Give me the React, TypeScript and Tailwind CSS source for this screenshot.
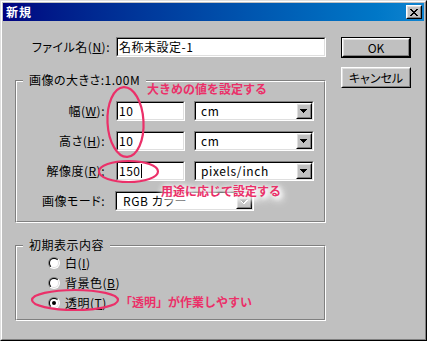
import React from "react";

const FONT = "font-['Noto_Sans_CJK_JP',sans-serif]";
const PINK = "#eb3069";

function Sunken({
  className = "",
  innerClassName = "",
  children,
}: {
  className?: string;
  innerClassName?: string;
  children?: React.ReactNode;
}) {
  return (
    <div
      className={
        "border border-t-[#808080] border-l-[#808080] border-r-white border-b-white " +
        className
      }
    >
      <div
        className={
          "h-full w-full border border-t-black border-l-black border-r-[#dfdfdf] border-b-[#dfdfdf] bg-white flex items-center " +
          innerClassName
        }
      >
        {children}
      </div>
    </div>
  );
}

function Raised({
  className = "",
  children,
}: {
  className?: string;
  children?: React.ReactNode;
}) {
  return (
    <div
      className={
        "border border-t-white border-l-white border-r-black border-b-black " +
        className
      }
    >
      <div className="h-full w-full border border-t-[#dfdfdf] border-l-[#dfdfdf] border-r-[#808080] border-b-[#808080] bg-[#c0c0c0] flex items-center justify-center">
        {children}
      </div>
    </div>
  );
}

function Arrow({ disabled = false }: { disabled?: boolean }) {
  return (
    <svg width="8" height="5" viewBox="0 0 8 5" shapeRendering="crispEdges">
      {disabled && <path d="M1 1h7v1h-1v1h-1v1h-1v1h-2v-1h-1v-1h-1z" fill="#ffffff" />}
      <path
        d="M0 0h7v1h-1v1h-1v1h-1v1h-1v-1h-1v-1h-1v-1h-1z"
        fill={disabled ? "#808080" : "#000000"}
      />
    </svg>
  );
}

function Select({
  value,
  className = "",
  disabled = false,
  pl = "pl-[5px]",
}: {
  value: string;
  className?: string;
  disabled?: boolean;
  pl?: string;
}) {
  return (
    <Sunken className={"h-[20px] " + className} innerClassName="justify-between">
      <span className={"tracking-[0.6px] " + pl}>{value}</span>
      <Raised className="w-[16px] h-[16px] shrink-0">
        <Arrow disabled={disabled} />
      </Raised>
    </Sunken>
  );
}

function Group({
  label,
  className = "",
  children,
}: {
  label: string;
  className?: string;
  children?: React.ReactNode;
}) {
  return (
    <div
      className={
        "relative border border-t-[#808080] border-l-[#808080] border-r-white border-b-white " +
        className
      }
    >
      <div className="h-full w-full border border-t-white border-l-white border-r-[#808080] border-b-[#808080]">
        {children}
      </div>
      <span className="absolute left-[7px] top-[-9px] bg-[#c0c0c0] px-[6px] leading-[16px] tracking-[0.5px]">
        {label}
      </span>
    </div>
  );
}

function Radio({ checked = false, id }: { checked?: boolean; id: string }) {
  return (
    <svg width="12" height="12" viewBox="0 0 12 12" className="shrink-0">
      <defs>
        <linearGradient id={id + "o"} x1="0" y1="0" x2="1" y2="1">
          <stop offset="0.5" stopColor="#808080" />
          <stop offset="0.5" stopColor="#ffffff" />
        </linearGradient>
        <linearGradient id={id + "i"} x1="0" y1="0" x2="1" y2="1">
          <stop offset="0.5" stopColor="#000000" />
          <stop offset="0.5" stopColor="#dfdfdf" />
        </linearGradient>
      </defs>
      <circle cx="6" cy="6" r="6" fill={`url(#${id}o)`} />
      <circle cx="6" cy="6" r="5" fill={`url(#${id}i)`} />
      <circle cx="6" cy="6" r="4" fill="#ffffff" />
      {checked && <circle cx="6" cy="6" r="2" fill="#000000" />}
    </svg>
  );
}

function Row({ label, children }: { label: React.ReactNode; children: React.ReactNode }) {
  return (
    <div className="flex items-center h-[20px]">
      <div className="w-[99px] text-right pr-[11px] whitespace-nowrap">{label}</div>
      {children}
    </div>
  );
}

export default function App() {
  return (
    <div
      className={
        "relative w-[427px] h-[341px] select-none text-[12px] leading-[14px] text-black " +
        FONT
      }
    >
      <div className="w-full h-full border border-t-[#dfdfdf] border-l-[#dfdfdf] border-r-black border-b-black [font-feature-settings:'palt']">
        <div className="w-full h-full border border-t-white border-l-white border-r-[#808080] border-b-[#808080] bg-[#c0c0c0] p-px flex flex-col">
          {/* Title bar */}
          <div className="h-[18px] shrink-0 flex items-center justify-between bg-linear-to-r from-[#000080] to-[#1084d0] pl-[3px] pr-[2px]">
            <span className="text-white font-bold text-[12px] tracking-[1px]">新規</span>
            <Raised className="w-[16px] h-[14px]">
              <svg width="8" height="7" viewBox="0 0 8 7" shapeRendering="crispEdges">
                <path
                  d="M0 0h2v1h1v1h2v-1h1v-1h2v1h-1v1h-1v1h-1v1h1v1h1v1h1v1h-2v-1h-1v-1h-2v1h-1v1h-2v-1h1v-1h1v-1h1v-1h-1v-1h-1v-1h-1z"
                  fill="#000"
                />
              </svg>
            </Raised>
          </div>

          {/* Body */}
          <div className="flex pl-[12px] pt-[16px] gap-[15px]">
            <div className="w-[311px] flex flex-col">
              {/* File name */}
              <div className="flex items-center h-[20px]">
                <div className="w-[101px] text-right pr-[6px] whitespace-nowrap tracking-[0.5px]">
                  ファイル名(<u>N</u>):
                </div>
                <Sunken className="w-[210px] h-[20px]">
                  <span className="pl-[1px] tracking-[0.5px]">名称未設定-1</span>
                </Sunken>
              </div>

              {/* Image size */}
              <Group label="画像の大きさ:1.00M" className="mt-[23px] h-[143px]">
                <div className="flex flex-col pt-[19px] gap-[10px] tracking-[0.5px]">
                  <Row
                    label={
                      <>
                        幅(<u>W</u>):
                      </>
                    }
                  >
                    <Sunken className="w-[69px] h-[20px]">
                      <span className="pl-[1px]">10</span>
                    </Sunken>
                    <Select value="cm" className="w-[120px] ml-[9px]" />
                  </Row>
                  <Row
                    label={
                      <>
                        高さ(<u>H</u>):
                      </>
                    }
                  >
                    <Sunken className="w-[69px] h-[20px]">
                      <span className="pl-[1px]">10</span>
                    </Sunken>
                    <Select value="cm" className="w-[120px] ml-[9px]" />
                  </Row>
                  <Row
                    label={
                      <>
                        解像度(<u>R</u>):
                      </>
                    }
                  >
                    <Sunken className="w-[69px] h-[20px]">
                      <span className="pl-[1px]">150</span>
                      <span className="w-px h-[14px] bg-black ml-[1px]" />
                    </Sunken>
                    <Select value="pixels/inch" className="w-[120px] ml-[9px]" />
                  </Row>
                  <div className="flex items-center h-[20px]">
                    <div className="w-[98px] text-right pr-[10px] whitespace-nowrap">画像モード:</div>
                    <Select value="RGB カラー" className="w-[139px]" disabled pl="pl-[6px]" />
                  </div>
                </div>
              </Group>

              {/* Initial contents */}
              <Group label="初期表示内容" className="mt-[22px] h-[76px]">
                <div className="flex flex-col pt-[6px] pl-[31px] tracking-[0.5px]">
                  <div className="flex items-center h-[20px] gap-[5px]">
                    <Radio id="r1" />
                    <span>
                      白(<u>I</u>)
                    </span>
                  </div>
                  <div className="flex items-center h-[20px] gap-[5px]">
                    <Radio id="r2" />
                    <span>
                      背景色(<u>B</u>)
                    </span>
                  </div>
                  <div className="flex items-center h-[20px] gap-[5px]">
                    <Radio id="r3" checked />
                    <span>
                      透明(<u>T</u>)
                    </span>
                  </div>
                </div>
              </Group>
            </div>

            {/* Buttons */}
            <div className="w-[70px] flex flex-col gap-[9px]">
              <div className="h-[21px] border border-black">
                <Raised className="w-full h-full">
                  <span>OK</span>
                </Raised>
              </div>
              <Raised className="w-full h-[21px]">
                <span>キャンセル</span>
              </Raised>
            </div>
          </div>
        </div>
      </div>

      {/* Annotations overlay */}
      <svg
        className="absolute left-0 top-0 pointer-events-none"
        width="427"
        height="341"
        viewBox="0 0 427 341"
      >
        <ellipse
          cx="125.5"
          cy="122"
          rx="18"
          ry="35"
          fill="none"
          stroke={PINK}
          strokeWidth="2.2"
          transform="rotate(-3 125.5 122)"
        />
        <ellipse cx="128.5" cy="171.5" rx="29.5" ry="10.5" fill="none" stroke={PINK} strokeWidth="2.2" />
        <ellipse cx="75" cy="300" rx="43" ry="10" fill="none" stroke={PINK} strokeWidth="2.2" />
      </svg>
      <span
        className="absolute left-[147px] top-[81px] font-bold text-[12px] leading-[16px] whitespace-nowrap"
        style={{ color: PINK }}
      >
        大きめの値を設定する
      </span>
      <span
        className="absolute left-[161px] top-[183px] font-bold text-[12px] leading-[16px] whitespace-nowrap [text-shadow:2px_2px_4px_#fff,2px_2px_8px_#fff,0_0_6px_#fff,3px_4px_10px_#fff]"
        style={{ color: PINK }}
      >
        用途に応じて設定する
      </span>
      <span
        className="absolute left-[120px] top-[294px] font-bold text-[12px] leading-[16px] whitespace-nowrap"
        style={{ color: PINK }}
      >
        「透明」が作業しやすい
      </span>
    </div>
  );
}
